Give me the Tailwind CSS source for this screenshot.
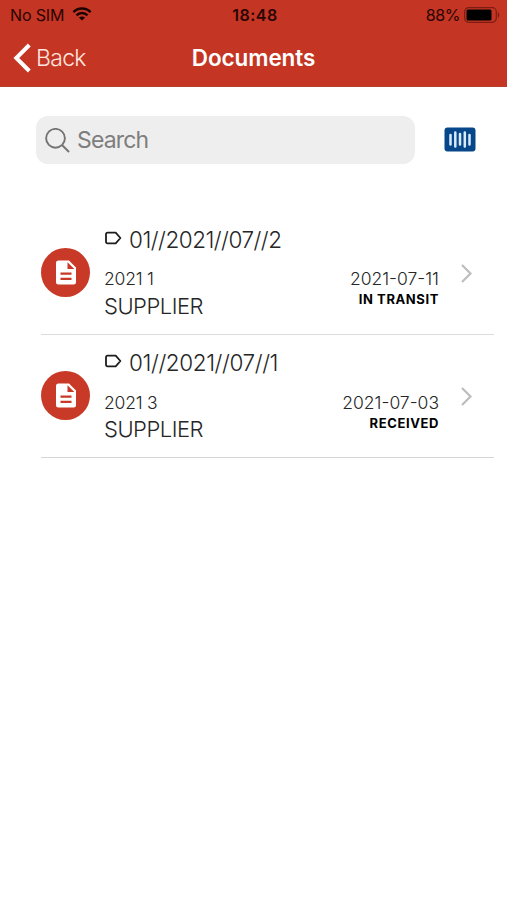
<!DOCTYPE html>
<html lang="en">
<head>
<meta charset="utf-8">
<title>Documents</title>
<script src="https://cdn.jsdelivr.net/npm/@tailwindcss/browser@4"></script>
</head>
<body class="bg-white font-['Inter','Liberation_Sans',sans-serif] text-[#262626] h-[900px] overflow-hidden whitespace-nowrap">
<header class="h-[87px] bg-[#c43523] border-b border-[#b5402f]">
  <div class="grid grid-cols-3 h-[30px] items-center pl-[10px] pr-[7px] text-[16px] leading-[30px] text-[#2a0504]">
    <div class="flex items-center gap-[8px]"><span class="tracking-[-0.15px]">No SIM</span>
      <svg class="w-[20px] h-[14px] -mt-[2px]" viewBox="0 0 20 14" fill="none" stroke="#1d0202" stroke-width="2.5"><path d="M1.4 5.1C6.2.3 13.8.3 18.6 5.1"/><path d="M4.5 8.3c3.1-3 7.9-3 11 0"/><path d="M10 13.6 6.9 10.5c1.8-1.5 4.4-1.5 6.2 0Z" fill="#1d0202" stroke="none"/></svg>
    </div>
    <div class="text-center font-semibold tracking-[0.5px]">18:48</div>
    <div class="flex items-center justify-end gap-[4px]"><span class="tracking-[-0.4px]">88%</span>
      <svg class="w-[36px] h-[16px]" viewBox="0 0 36 16"><rect x=".7" y=".7" width="31.6" height="14.6" rx="4" fill="none" stroke="#7c1c12" stroke-width="1.2"/><rect x="2.5" y="2.5" width="25" height="11" rx="1.5" fill="#000"/><path d="M33.8 5.3c2 1 2 4.4 0 5.4Z" fill="#7c1c12"/></svg>
    </div>
  </div>
  <div class="grid grid-cols-3 h-[55px] items-center px-[13px] text-white">
    <div class="flex items-center gap-[5px]">
      <svg class="w-[18px] h-[30px]" viewBox="0 0 18 30" fill="none" stroke="#fff" stroke-width="4"><path d="M16.3 2 3.300 15l13 13"/></svg>
      <span class="text-[23px] leading-[28px] font-[350] text-[#ffe4df] tracking-[-0.7px]">Back</span>
    </div>
    <h1 class="text-center text-[22.500px] leading-[28px] font-semibold tracking-[-0.1px]">Documents</h1>
  </div>
</header>
<main>
  <div class="flex items-center pt-[29px] pl-[36px]">
    <div class="flex items-center w-[379px] h-[48px] rounded-[12px] bg-[#eeeeee] pl-[9px] gap-[7px] text-[#7d7d7d]">
      <svg class="w-[25px] h-[25px]" viewBox="0 0 25 25" fill="none" stroke="#747474" stroke-width="1.9"><circle cx="10.500" cy="10.300" r="9.400"/><path d="m17 17 7 7"/></svg>
      <span class="text-[23px] leading-[28px] tracking-[-0.85px]">Search</span>
    </div>
    <svg class="ml-[29px] -mt-[1px] w-[32px] h-[25px]" viewBox="0 0 32 25"><rect x=".5" y=".5" width="31" height="24" rx="3" fill="#064789"/><g stroke="#d9ebff" stroke-width="2.500" stroke-linecap="round"><path d="M6.500 8v9.500M11.300 5.500v14M16 7v10.500M20.800 5.500v14M25.500 8v9.500"/></g></svg>
  </div>
  <ul class="mt-[47px] ml-[41px] w-[453px]">
    <li class="flex h-[124px] border-b border-[#dcdcdc]">
      <div class="mt-[37px] w-[49px] h-[49px] rounded-full bg-[#c83a27] flex items-center justify-center">
        <svg class="w-[20px] h-[25px]" viewBox="0 0 20 25"><path d="M2.500.5H13l7 7V22a2.500 2.500 0 0 1-2.500 2.500h-15A2.500 2.500 0 0 1 0 22V3A2.500 2.500 0 0 1 2.500.5Z" fill="#fff"/><path d="M11.500 2.300V9h6.800ZM4.500 12.500h11v2.200h-11ZM4.500 17.700h11v2.200h-11Z" fill="#c83a27"/></svg>
      </div>
      <div class="flex-1 pl-[14px] pt-[13px]">
        <div class="flex items-center h-[32px] gap-[7px]"><svg class="w-[18px] h-[14px] -mt-[4px]" viewBox="0 0 18 14" fill="none" stroke="#1c1c1c" stroke-width="1.800" stroke-linejoin="round"><path d="M3.500 1.700h8.200L16.400 7l-4.700 5.300H3.500a1.500 1.500 0 0 1-1.500-1.500V3.200a1.500 1.500 0 0 1 1.500-1.500Z"/></svg><span class="text-[22.500px] font-[350] tracking-[-0.5px]">01//2021//07//2</span></div>
        <div class="flex justify-between w-[335px]">
          <div><div class="mt-[12px] text-[17.500px] leading-[22px] font-[350] tracking-[-0.2px]">2021 1</div><div class="mt-[1px] text-[22px] leading-[30px] font-[350] tracking-[-0.5px]">SUPPLIER</div></div>
          <div class="text-right"><div class="mt-[12px] text-[17.500px] leading-[22px] font-[350]">2021-07-11</div><div class="text-[13px] leading-[18px] font-bold text-black tracking-[0.6px]">IN TRANSIT</div></div>
        </div>
      </div>
      <svg class="mt-[53px] mr-[21px] w-[13px] h-[19px]" viewBox="0 0 13 19" fill="none" stroke="#bdbdbd" stroke-width="2.200"><path d="m2 1 8.500 8.500L2 18"/></svg>
    </li>
    <li class="flex h-[123px] border-b border-[#d5d5d5]">
      <div class="mt-[36px] w-[49px] h-[49px] rounded-full bg-[#c83a27] flex items-center justify-center">
        <svg class="w-[20px] h-[25px]" viewBox="0 0 20 25"><path d="M2.500.5H13l7 7V22a2.500 2.500 0 0 1-2.500 2.500h-15A2.500 2.500 0 0 1 0 22V3A2.500 2.500 0 0 1 2.500.5Z" fill="#fff"/><path d="M11.500 2.300V9h6.800ZM4.500 12.500h11v2.200h-11ZM4.500 17.700h11v2.200h-11Z" fill="#c83a27"/></svg>
      </div>
      <div class="flex-1 pl-[14px] pt-[12px]">
        <div class="flex items-center h-[32px] gap-[7px]"><svg class="w-[18px] h-[14px] -mt-[4px]" viewBox="0 0 18 14" fill="none" stroke="#1c1c1c" stroke-width="1.800" stroke-linejoin="round"><path d="M3.500 1.700h8.200L16.400 7l-4.700 5.300H3.500a1.500 1.500 0 0 1-1.500-1.500V3.200a1.500 1.500 0 0 1 1.500-1.500Z"/></svg><span class="text-[22.500px] font-[350] tracking-[-0.4px]">01//2021//07//1</span></div>
        <div class="flex justify-between w-[335px]">
          <div><div class="mt-[13px] text-[17.500px] leading-[22px] font-[350] tracking-[-0.2px]">2021 3</div><div class="text-[22px] leading-[30px] font-[350] tracking-[-0.5px]">SUPPLIER</div></div>
          <div class="text-right"><div class="mt-[13px] text-[17.500px] leading-[22px] font-[350]">2021-07-03</div><div class="text-[13px] leading-[18px] font-bold text-black tracking-[0.6px]">RECEIVED</div></div>
        </div>
      </div>
      <svg class="mt-[52px] mr-[21px] w-[13px] h-[19px]" viewBox="0 0 13 19" fill="none" stroke="#bdbdbd" stroke-width="2.200"><path d="m2 1 8.500 8.500L2 18"/></svg>
    </li>
  </ul>
</main>
</body>
</html>
